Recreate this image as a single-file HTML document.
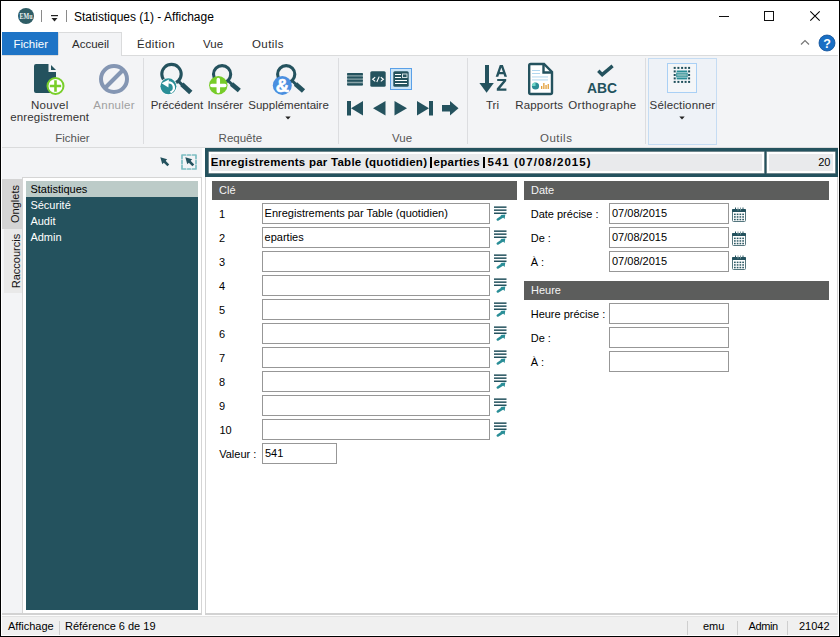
<!DOCTYPE html>
<html><head><meta charset="utf-8"><style>
html,body{margin:0;padding:0;width:840px;height:637px;overflow:hidden;background:#fff}
body{position:relative;font-family:"Liberation Sans",sans-serif}
div{position:absolute}
.t{white-space:nowrap;line-height:1}
</style></head><body>
<div style="left:0px;top:0px;width:840px;height:637px;background:#fff"></div>
<svg style="position:absolute;left:17px;top:8px" width="18" height="17" viewBox="0 0 18 17"><circle cx="9" cy="8" r="8" fill="#2f5d66"/><text x="9" y="11" font-family="Liberation Serif" font-size="7.6" font-weight="bold" fill="#eef3f3" text-anchor="middle" textLength="13" lengthAdjust="spacingAndGlyphs">EMu</text></svg>
<div style="left:41px;top:10px;width:1px;height:12px;background:#8a8a8a"></div>
<svg style="position:absolute;left:50px;top:14px" width="10" height="9" viewBox="0 0 10 9"><rect x="1" y="1" width="7" height="1.2" fill="#222"/><path d="M1.5 4 L7.5 4 L4.5 7.5 Z" fill="#222"/></svg>
<div style="left:66px;top:10px;width:1px;height:12px;background:#8a8a8a"></div>
<div class="t" style="left:74px;top:10.84px;font-size:12px;color:#000;font-weight:normal;">Statistiques (1) - Affichage</div>
<div style="left:719px;top:16px;width:10px;height:1px;background:#111"></div>
<div style="left:764px;top:11px;width:10px;height:10px;border:1px solid #111;box-sizing:border-box"></div>
<svg style="position:absolute;left:809px;top:10px" width="12" height="12" viewBox="0 0 12 12"><path d="M1.3 1.3 L10.7 10.7 M10.7 1.3 L1.3 10.7" stroke="#000" stroke-width="1.05"/></svg>
<div style="left:2px;top:32px;width:56px;height:23px;background:#1e74c6"></div>
<div class="t" style="left:13.5px;top:39.27px;font-size:11.5px;color:#fff;font-weight:normal;">Fichier</div>
<div style="left:58px;top:32px;width:64px;height:24px;background:#f3f4f6;border:1px solid #dadbdc;border-bottom:none;box-sizing:border-box"></div>
<div class="t" style="left:72px;top:39.27px;font-size:11.5px;color:#2b2b2b;font-weight:normal;">Accueil</div>
<div class="t" style="left:137px;top:39.27px;font-size:11.5px;color:#2b2b2b;font-weight:normal;letter-spacing:0.4px">Édition</div>
<div class="t" style="left:203px;top:39.27px;font-size:11.5px;color:#2b2b2b;font-weight:normal;">Vue</div>
<div class="t" style="left:252px;top:39.27px;font-size:11.5px;color:#2b2b2b;font-weight:normal;letter-spacing:0.4px">Outils</div>
<svg style="position:absolute;left:800px;top:39px" width="11" height="7" viewBox="0 0 11 7"><path d="M1 5.5 L5 1.5 L9 5.5" stroke="#777" stroke-width="1.2" fill="none"/></svg>
<svg style="position:absolute;left:818px;top:34px" width="18" height="18" viewBox="0 0 18 18"><circle cx="9" cy="9" r="8" fill="#1a6fc4" stroke="#0f4f97" stroke-width="0.8"/><text x="9" y="13.5" font-family="Liberation Sans" font-size="12.5" font-weight="bold" fill="#fff" text-anchor="middle">?</text></svg>
<div style="left:2px;top:55px;width:836px;height:93px;background:#f3f4f6;border-top:1px solid #dadbdc;border-bottom:1px solid #dadbdc;box-sizing:border-box"></div>
<div style="left:58px;top:55px;width:63px;height:1px;background:#f3f4f6"></div>
<div style="left:143px;top:58px;width:1px;height:86px;background:#dcdde0"></div>
<div style="left:338px;top:58px;width:1px;height:86px;background:#dcdde0"></div>
<div style="left:467px;top:58px;width:1px;height:86px;background:#dcdde0"></div>
<div style="left:645px;top:58px;width:1px;height:86px;background:#dcdde0"></div>
<div class="t" style="left:31px;top:99.57px;font-size:11.5px;color:#333;font-weight:normal;letter-spacing:0.3px">Nouvel</div>
<div class="t" style="left:10.2px;top:111.97px;font-size:11.5px;color:#333;font-weight:normal;letter-spacing:0.16px">enregistrement</div>
<div class="t" style="left:93.3px;top:99.57px;font-size:11.5px;color:#a0a0a0;font-weight:normal;letter-spacing:0.28px">Annuler</div>
<div class="t" style="left:55.2px;top:132.77px;font-size:11.5px;color:#555;font-weight:normal;">Fichier</div>
<div class="t" style="left:150.7px;top:99.57px;font-size:11.5px;color:#333;font-weight:normal;">Précédent</div>
<div class="t" style="left:207.4px;top:99.57px;font-size:11.5px;color:#333;font-weight:normal;">Insérer</div>
<div class="t" style="left:248.3px;top:99.57px;font-size:11.5px;color:#333;font-weight:normal;">Supplémentaire</div>
<svg style="position:absolute;left:285px;top:116px" width="6" height="4" viewBox="0 0 6 4"><path d="M0.3 0.5 L5.7 0.5 L3 3.5 Z" fill="#222"/></svg>
<div class="t" style="left:218.6px;top:132.77px;font-size:11.5px;color:#555;font-weight:normal;">Requête</div>
<div class="t" style="left:392.1px;top:132.77px;font-size:11.5px;color:#555;font-weight:normal;">Vue</div>
<div class="t" style="left:486px;top:99.57px;font-size:11.5px;color:#333;font-weight:normal;">Tri</div>
<div class="t" style="left:515.2px;top:99.57px;font-size:11.5px;color:#333;font-weight:normal;letter-spacing:0.18px">Rapports</div>
<div class="t" style="left:568.3px;top:99.57px;font-size:11.5px;color:#333;font-weight:normal;letter-spacing:0.34px">Orthographe</div>
<div class="t" style="left:540px;top:132.77px;font-size:11.5px;color:#555;font-weight:normal;letter-spacing:0.5px">Outils</div>
<div style="left:648px;top:58px;width:69px;height:87px;background:#eef2f7;border:1px solid #c5dcf3;box-sizing:border-box"></div>
<div class="t" style="left:649.6px;top:99.57px;font-size:11.5px;color:#333;font-weight:normal;letter-spacing:0.14px">Sélectionner</div>
<svg style="position:absolute;left:679px;top:116px" width="6" height="4" viewBox="0 0 6 4"><path d="M0.3 0.5 L5.7 0.5 L3 3.5 Z" fill="#222"/></svg>
<svg style="position:absolute;left:33px;top:63px" width="34" height="34" viewBox="0 0 34 34"><path d="M1 3 Q1 1 3 1 L15.5 1 L15.5 9 L23 9 L23 28 Q23 30 21 30 L3 30 Q1 30 1 28 Z" fill="#24525e"/>
<path d="M18 2 L23 7 L18 7 Z" fill="#24525e"/>
<circle cx="22.5" cy="23" r="8" fill="#fff" stroke="#78cf2a" stroke-width="2"/>
<path d="M22.5 17.3 V28.7 M16.8 23 H28.2" stroke="#78cf2a" stroke-width="2.6"/></svg>
<svg style="position:absolute;left:98px;top:63px" width="32" height="32" viewBox="0 0 32 32"><circle cx="16" cy="16" r="13" fill="none" stroke="#8496b3" stroke-width="4"/><path d="M25 7 L7 25" stroke="#8496b3" stroke-width="4"/></svg>
<svg style="position:absolute;left:150px;top:55px" width="50" height="45" viewBox="0 0 50 45"><circle cx="21.5" cy="19.1" r="9.7" fill="none" stroke="#24525e" stroke-width="3.1"/><path d="M28 25.8 L32.3 29.8" stroke="#24525e" stroke-width="3"/><path d="M31.799999999999997 29.3 L40.8 37.6" stroke="#24525e" stroke-width="4.8"/><circle cx="18.4" cy="31.3" r="8.7" fill="#fff"/><circle cx="18.4" cy="31.3" r="8" fill="#2a8e97"/><path d="M18.3 27.3 A5.2 5.2 0 0 1 20.4 37.4" fill="none" stroke="#fff" stroke-width="2.3"/><path d="M11.6 28.3 L18.9 24.6 L18.4 32.4 Z" fill="#fff"/></svg>
<svg style="position:absolute;left:200px;top:55px" width="50" height="45" viewBox="0 0 50 45"><circle cx="22.1" cy="19.2" r="8.6" fill="none" stroke="#24525e" stroke-width="3.1"/><path d="M28 25.5 L32 29.5" stroke="#24525e" stroke-width="3"/><path d="M31.5 29.0 L39.3 35.5" stroke="#24525e" stroke-width="4.8"/><circle cx="18.3" cy="30.3" r="9.2" fill="#77cc29"/><path d="M18.3 24.5 V36.5 M11.8 30.4 H24.8" stroke="#fff" stroke-width="3.5" stroke-linecap="round"/></svg>
<svg style="position:absolute;left:265px;top:55px" width="50" height="45" viewBox="0 0 50 45"><circle cx="21.2" cy="19.2" r="8.6" fill="none" stroke="#24525e" stroke-width="3.1"/><path d="M27 25.5 L31 29.5" stroke="#24525e" stroke-width="3"/><path d="M30.5 29.0 L38.5 36" stroke="#24525e" stroke-width="4.8"/><circle cx="17.3" cy="30.4" r="9.5" fill="#4a8fe0"/><text x="17.4" y="37" font-family="Liberation Sans" font-weight="bold" font-size="18.5" fill="#fff" stroke="#fff" stroke-width="0.6" text-anchor="middle">&amp;</text></svg>
<svg style="position:absolute;left:346px;top:72px" width="18" height="15" viewBox="0 0 18 15"><rect x="1" y="1" width="16" height="12.5" rx="1" fill="#8aa4a9"/><rect x="1" y="1" width="16" height="2.2" rx="1" fill="#24525e"/><rect x="1" y="4.4" width="16" height="2" rx="1" fill="#24525e"/><rect x="1" y="7.8" width="16" height="2" rx="1" fill="#24525e"/><rect x="1" y="11.3" width="16" height="2.2" rx="1" fill="#24525e"/></svg>
<svg style="position:absolute;left:370px;top:71px" width="16" height="16" viewBox="0 0 16 16"><rect x="0.3" y="0.3" width="15.4" height="15.4" rx="1.5" fill="#24525e"/><path d="M5.2 6.2 L2.6 8.3 L5.2 10.4 M10.8 6.2 L13.4 8.3 L10.8 10.4 M9.2 5.6 L6.8 11" fill="none" stroke="#fff" stroke-width="1.1"/></svg>
<div style="left:390px;top:68px;width:22px;height:22px;background:#cce4f7;border:1px solid #5aa0e8;box-sizing:border-box"></div>
<svg style="position:absolute;left:393px;top:71px" width="16" height="16" viewBox="0 0 16 16"><rect x="0.3" y="0.3" width="15.4" height="15.4" rx="1.5" fill="#24525e"/><rect x="2" y="3" width="6" height="1" fill="#fff"/><rect x="2" y="6" width="6" height="1" fill="#fff"/><rect x="9.5" y="3" width="4.5" height="3.5" fill="none" stroke="#e6eef0" stroke-width="0.9"/><rect x="2" y="9" width="12" height="1" fill="#fff"/><rect x="2" y="12" width="12" height="1" fill="#fff"/></svg>
<svg style="position:absolute;left:346px;top:100px" width="120" height="17" viewBox="0 0 120 17"><rect x="1" y="1" width="4" height="14.5" fill="#24525e"/><path d="M5 8.2 L17 1 L17 15.5 Z" fill="#24525e"/>
<path d="M27 8.2 L39.5 1 L39.5 15.5 Z" fill="#24525e"/>
<path d="M48.5 1 L61 8.2 L48.5 15.5 Z" fill="#24525e"/>
<path d="M71 1 L83 8.2 L71 15.5 Z" fill="#24525e"/><rect x="83" y="1" width="4" height="14.5" fill="#24525e"/>
<rect x="96" y="5" width="8" height="6.5" fill="#24525e"/><path d="M104 1 L112.5 8.2 L104 15.5 Z" fill="#24525e"/></svg>
<svg style="position:absolute;left:478px;top:63px" width="32" height="32" viewBox="0 0 32 32"><rect x="7" y="2" width="4" height="19" fill="#24525e"/><path d="M1.4 20 L15.8 20 L8.6 29.8 Z" fill="#24525e"/>
<path fill-rule="evenodd" d="M21.8 2 H24.9 L29 13.8 H26.4 L25.6 11.2 H21.1 L20.3 13.8 H17.7 Z M21.8 8.9 H24.9 L23.35 4.4 Z" fill="#24525e"/>
<path d="M19.2 15.9 H28.2 V18.1 L22 25.5 H28.4 V27.7 H18.8 V25.6 L25.1 18.1 H19.2 Z" fill="#24525e"/></svg>
<svg style="position:absolute;left:527px;top:62px" width="28" height="34" viewBox="0 0 28 34"><path d="M2.2 3.5 Q2.2 2 3.7 2 L17 2 L25 10 L25 30.5 Q25 32 23.5 32 L3.7 32 Q2.2 32 2.2 30.5 Z" fill="#fff" stroke="#24525e" stroke-width="2.4"/>
<path d="M16.5 2 L16.5 10.5 L25 10.5" fill="none" stroke="#24525e" stroke-width="2.4"/>
<rect x="5" y="8" width="8" height="0.9" fill="#a9d3ee"/><rect x="5" y="11" width="8" height="0.9" fill="#a9d3ee"/><rect x="5" y="14.5" width="16" height="0.9" fill="#a9d3ee"/><rect x="5" y="17.5" width="16" height="0.9" fill="#a9d3ee"/>
<circle cx="8.5" cy="24" r="3.6" fill="#2a8e97"/><path d="M8.5 24 L8.5 20.4 A3.6 3.6 0 0 0 4.9 24 Z" fill="#6fd6c8"/>
<rect x="14" y="24" width="1.3" height="3" fill="#e3a03a"/><rect x="16.2" y="21" width="1.3" height="6" fill="#e3a03a"/><rect x="18.4" y="23" width="1.3" height="4" fill="#e3a03a"/><rect x="20.6" y="22" width="1.3" height="5" fill="#e3a03a"/></svg>
<svg style="position:absolute;left:585px;top:62px" width="34" height="34" viewBox="0 0 34 34"><path d="M13.3 8.8 L17.2 12.6 L27.6 3.9" fill="none" stroke="#24525e" stroke-width="3.4"/>
<text x="2" y="31" font-family="Liberation Sans" font-weight="bold" font-size="15" textLength="30" lengthAdjust="spacingAndGlyphs" fill="#24525e">ABC</text></svg>
<div style="left:667px;top:63px;width:30px;height:30px;background:#f4f6f8;border:1px solid #a9d0f5;box-sizing:border-box"></div>
<svg style="position:absolute;left:670px;top:64px" width="24" height="24" viewBox="0 0 24 24"><rect x="3.7000000000000455" y="2.9000000000000057" width="2" height="2" fill="#1f4f5a"/><rect x="3.7000000000000455" y="6.400000000000006" width="2" height="2" fill="#1f4f5a"/><rect x="3.7000000000000455" y="10.0" width="2" height="2" fill="#1f4f5a"/><rect x="3.7000000000000455" y="13.400000000000006" width="2" height="2" fill="#1f4f5a"/><rect x="3.7000000000000455" y="16.900000000000006" width="2" height="2" fill="#1f4f5a"/><rect x="7.399999999999977" y="2.9000000000000057" width="2" height="2" fill="#1f4f5a"/><rect x="7.399999999999977" y="16.900000000000006" width="2" height="2" fill="#1f4f5a"/><rect x="11.100000000000023" y="2.9000000000000057" width="2" height="2" fill="#1f4f5a"/><rect x="11.100000000000023" y="16.900000000000006" width="2" height="2" fill="#1f4f5a"/><rect x="14.600000000000023" y="2.9000000000000057" width="2" height="2" fill="#1f4f5a"/><rect x="14.600000000000023" y="16.900000000000006" width="2" height="2" fill="#1f4f5a"/><rect x="18.100000000000023" y="2.9000000000000057" width="2" height="2" fill="#1f4f5a"/><rect x="18.100000000000023" y="6.400000000000006" width="2" height="2" fill="#1f4f5a"/><rect x="18.100000000000023" y="10.0" width="2" height="2" fill="#1f4f5a"/><rect x="18.100000000000023" y="13.400000000000006" width="2" height="2" fill="#1f4f5a"/><rect x="18.100000000000023" y="16.900000000000006" width="2" height="2" fill="#1f4f5a"/><rect x="6.7" y="6.5" width="10.5" height="1.6" fill="#2a8e97"/><rect x="6.7" y="9" width="10.5" height="4" fill="#7fb8b9" stroke="#2a8e97" stroke-width="0.9"/><rect x="6.7" y="13.8" width="10.5" height="1.6" fill="#2a8e97"/></svg>
<div style="left:2px;top:148px;width:200px;height:466px;background:#f3f4f6"></div>
<svg style="position:absolute;left:160px;top:157px" width="11" height="11" viewBox="0 0 11 11"><path d="M0.3 0.3 L7.2 2.3 L2.3 7.2 Z" fill="#24525e"/><path d="M3.5 3.5 L8.3 8.3" stroke="#24525e" stroke-width="2.6"/></svg>
<svg style="position:absolute;left:180px;top:153px" width="18" height="18" viewBox="0 0 18 18"><path d="M2 5.6 V2 H5.6 M12.4 2 H16 V5.6 M16 12.4 V16 H12.4 M5.6 16 H2 V12.4 M7.6 2 H10.4 M7.6 16 H10.4 M2 7.6 V10.4 M16 7.6 V10.4" fill="none" stroke="#7cbdc2" stroke-width="1.7" stroke-linecap="round" stroke-linejoin="round"/></svg>
<svg style="position:absolute;left:185px;top:157px" width="11" height="11" viewBox="0 0 11 11"><path d="M0.3 0.3 L7.2 2.3 L2.3 7.2 Z" fill="#24525e"/><path d="M3.5 3.5 L8.3 8.3" stroke="#24525e" stroke-width="2.6"/></svg>
<div style="left:22px;top:177px;width:180px;height:437px;background:#fff;border:1px solid #d5d5d5;box-sizing:border-box"></div>
<div style="left:26px;top:181px;width:172px;height:429px;background:#24525e"></div>
<div style="left:26px;top:181px;width:172px;height:16px;background:#bccbc8"></div>
<div class="t" style="left:30.4px;top:184.49px;font-size:11px;color:#000;font-weight:normal;">Statistiques</div>
<div class="t" style="left:30.4px;top:200.49px;font-size:11px;color:#fff;font-weight:normal;">Sécurité</div>
<div class="t" style="left:30.4px;top:216.49px;font-size:11px;color:#fff;font-weight:normal;">Audit</div>
<div class="t" style="left:30.4px;top:232.49px;font-size:11px;color:#fff;font-weight:normal;">Admin</div>
<div style="left:2px;top:179px;width:20px;height:50px;background:#d4d4d4"></div>
<div style="left:4px;top:229px;width:18px;height:64px;background:#e9e9e9"></div>
<div class="t" style="left:-10.5px;top:197px;width:50px;height:14px;font-size:11px;line-height:14px;text-align:center;transform:rotate(-90deg);color:#111">Onglets</div>
<div class="t" style="left:-19.5px;top:254px;width:70px;height:14px;font-size:11px;line-height:14px;text-align:center;transform:rotate(-90deg);color:#111">Raccourcis</div>
<div style="left:205px;top:177px;width:633px;height:437px;background:#fff;border-left:1px solid #d5d5d5;border-right:1px solid #d5d5d5;box-sizing:border-box"></div>
<div style="left:205px;top:148px;width:633px;height:29px;background:#24525e"></div>
<div style="left:209px;top:152px;width:555px;height:21px;background:#e9eaec;border:2px solid #fff;box-shadow:0 0 0 0.5px #b9b9b9;box-sizing:border-box"></div>
<div style="left:767px;top:152px;width:68px;height:21px;background:#e9eaec;border:2px solid #fff;box-shadow:0 0 0 0.5px #b9b9b9;box-sizing:border-box"></div>
<div class="t" style="left:210.8px;top:157.27px;font-size:11.5px;color:#000;font-weight:bold;letter-spacing:0.26px">Enregistrements par Table (quotidien)</div>
<div style="left:429.6px;top:157px;width:2px;height:10.5px;background:#000"></div>
<div class="t" style="left:433.5px;top:157.27px;font-size:11.5px;color:#000;font-weight:bold;letter-spacing:0.28px">eparties</div>
<div style="left:482.8px;top:157px;width:2px;height:10.5px;background:#000"></div>
<div class="t" style="left:487.5px;top:157.27px;font-size:11.5px;color:#000;font-weight:bold;letter-spacing:1.03px">541 (07/08/2015)</div>
<div class="t" style="right:9.5px;top:156.69px;font-size:11px;color:#000;font-weight:normal;">20</div>
<div style="left:212px;top:181px;width:305px;height:19px;background:#5c5d5c"></div>
<div class="t" style="left:219px;top:184.69px;font-size:11px;color:#f4f4f4;font-weight:normal;">Clé</div>
<div style="left:524px;top:181px;width:305px;height:19px;background:#5c5d5c"></div>
<div class="t" style="left:531px;top:184.69px;font-size:11px;color:#f4f4f4;font-weight:normal;">Date</div>
<div style="left:524px;top:281px;width:305px;height:19px;background:#5c5d5c"></div>
<div class="t" style="left:531px;top:284.69px;font-size:11px;color:#f4f4f4;font-weight:normal;">Heure</div>
<div style="left:262px;top:203px;width:228px;height:21px;border:1px solid #979797;box-sizing:border-box;background:#fff"></div>
<div class="t" style="left:219px;top:209.19px;font-size:11px;color:#000;font-weight:normal;">1</div>
<div class="t" style="left:264.6px;top:207.69px;font-size:11px;color:#000;font-weight:normal;">Enregistrements par Table (quotidien)</div>
<svg style="position:absolute;left:494px;top:206px" width="14" height="15" viewBox="0 0 14 15"><rect x="0" y="0.4" width="12.5" height="1.5" fill="#24525e"/><rect x="0" y="3.4" width="12.5" height="1.5" fill="#24525e"/><rect x="0" y="6.5" width="12.5" height="1.5" fill="#24525e"/><path d="M3.9 13.5 L8.3 10.6" stroke="#2a8e97" stroke-width="2.6" stroke-linecap="round"/><path d="M11.3 8.6 L6.4 9.0 L10.6 13.1 Z" fill="#2a8e97"/></svg>
<div style="left:262px;top:227px;width:228px;height:21px;border:1px solid #979797;box-sizing:border-box;background:#fff"></div>
<div class="t" style="left:219px;top:233.19px;font-size:11px;color:#000;font-weight:normal;">2</div>
<div class="t" style="left:264.6px;top:231.69px;font-size:11px;color:#000;font-weight:normal;">eparties</div>
<svg style="position:absolute;left:494px;top:230px" width="14" height="15" viewBox="0 0 14 15"><rect x="0" y="0.4" width="12.5" height="1.5" fill="#24525e"/><rect x="0" y="3.4" width="12.5" height="1.5" fill="#24525e"/><rect x="0" y="6.5" width="12.5" height="1.5" fill="#24525e"/><path d="M3.9 13.5 L8.3 10.6" stroke="#2a8e97" stroke-width="2.6" stroke-linecap="round"/><path d="M11.3 8.6 L6.4 9.0 L10.6 13.1 Z" fill="#2a8e97"/></svg>
<div style="left:262px;top:251px;width:228px;height:21px;border:1px solid #979797;box-sizing:border-box;background:#fff"></div>
<div class="t" style="left:219px;top:257.19px;font-size:11px;color:#000;font-weight:normal;">3</div>
<svg style="position:absolute;left:494px;top:254px" width="14" height="15" viewBox="0 0 14 15"><rect x="0" y="0.4" width="12.5" height="1.5" fill="#24525e"/><rect x="0" y="3.4" width="12.5" height="1.5" fill="#24525e"/><rect x="0" y="6.5" width="12.5" height="1.5" fill="#24525e"/><path d="M3.9 13.5 L8.3 10.6" stroke="#2a8e97" stroke-width="2.6" stroke-linecap="round"/><path d="M11.3 8.6 L6.4 9.0 L10.6 13.1 Z" fill="#2a8e97"/></svg>
<div style="left:262px;top:275px;width:228px;height:21px;border:1px solid #979797;box-sizing:border-box;background:#fff"></div>
<div class="t" style="left:219px;top:281.19px;font-size:11px;color:#000;font-weight:normal;">4</div>
<svg style="position:absolute;left:494px;top:278px" width="14" height="15" viewBox="0 0 14 15"><rect x="0" y="0.4" width="12.5" height="1.5" fill="#24525e"/><rect x="0" y="3.4" width="12.5" height="1.5" fill="#24525e"/><rect x="0" y="6.5" width="12.5" height="1.5" fill="#24525e"/><path d="M3.9 13.5 L8.3 10.6" stroke="#2a8e97" stroke-width="2.6" stroke-linecap="round"/><path d="M11.3 8.6 L6.4 9.0 L10.6 13.1 Z" fill="#2a8e97"/></svg>
<div style="left:262px;top:299px;width:228px;height:21px;border:1px solid #979797;box-sizing:border-box;background:#fff"></div>
<div class="t" style="left:219px;top:305.19px;font-size:11px;color:#000;font-weight:normal;">5</div>
<svg style="position:absolute;left:494px;top:302px" width="14" height="15" viewBox="0 0 14 15"><rect x="0" y="0.4" width="12.5" height="1.5" fill="#24525e"/><rect x="0" y="3.4" width="12.5" height="1.5" fill="#24525e"/><rect x="0" y="6.5" width="12.5" height="1.5" fill="#24525e"/><path d="M3.9 13.5 L8.3 10.6" stroke="#2a8e97" stroke-width="2.6" stroke-linecap="round"/><path d="M11.3 8.6 L6.4 9.0 L10.6 13.1 Z" fill="#2a8e97"/></svg>
<div style="left:262px;top:323px;width:228px;height:21px;border:1px solid #979797;box-sizing:border-box;background:#fff"></div>
<div class="t" style="left:219px;top:329.19px;font-size:11px;color:#000;font-weight:normal;">6</div>
<svg style="position:absolute;left:494px;top:326px" width="14" height="15" viewBox="0 0 14 15"><rect x="0" y="0.4" width="12.5" height="1.5" fill="#24525e"/><rect x="0" y="3.4" width="12.5" height="1.5" fill="#24525e"/><rect x="0" y="6.5" width="12.5" height="1.5" fill="#24525e"/><path d="M3.9 13.5 L8.3 10.6" stroke="#2a8e97" stroke-width="2.6" stroke-linecap="round"/><path d="M11.3 8.6 L6.4 9.0 L10.6 13.1 Z" fill="#2a8e97"/></svg>
<div style="left:262px;top:347px;width:228px;height:21px;border:1px solid #979797;box-sizing:border-box;background:#fff"></div>
<div class="t" style="left:219px;top:353.19px;font-size:11px;color:#000;font-weight:normal;">7</div>
<svg style="position:absolute;left:494px;top:350px" width="14" height="15" viewBox="0 0 14 15"><rect x="0" y="0.4" width="12.5" height="1.5" fill="#24525e"/><rect x="0" y="3.4" width="12.5" height="1.5" fill="#24525e"/><rect x="0" y="6.5" width="12.5" height="1.5" fill="#24525e"/><path d="M3.9 13.5 L8.3 10.6" stroke="#2a8e97" stroke-width="2.6" stroke-linecap="round"/><path d="M11.3 8.6 L6.4 9.0 L10.6 13.1 Z" fill="#2a8e97"/></svg>
<div style="left:262px;top:371px;width:228px;height:21px;border:1px solid #979797;box-sizing:border-box;background:#fff"></div>
<div class="t" style="left:219px;top:377.19px;font-size:11px;color:#000;font-weight:normal;">8</div>
<svg style="position:absolute;left:494px;top:374px" width="14" height="15" viewBox="0 0 14 15"><rect x="0" y="0.4" width="12.5" height="1.5" fill="#24525e"/><rect x="0" y="3.4" width="12.5" height="1.5" fill="#24525e"/><rect x="0" y="6.5" width="12.5" height="1.5" fill="#24525e"/><path d="M3.9 13.5 L8.3 10.6" stroke="#2a8e97" stroke-width="2.6" stroke-linecap="round"/><path d="M11.3 8.6 L6.4 9.0 L10.6 13.1 Z" fill="#2a8e97"/></svg>
<div style="left:262px;top:395px;width:228px;height:21px;border:1px solid #979797;box-sizing:border-box;background:#fff"></div>
<div class="t" style="left:219px;top:401.19px;font-size:11px;color:#000;font-weight:normal;">9</div>
<svg style="position:absolute;left:494px;top:398px" width="14" height="15" viewBox="0 0 14 15"><rect x="0" y="0.4" width="12.5" height="1.5" fill="#24525e"/><rect x="0" y="3.4" width="12.5" height="1.5" fill="#24525e"/><rect x="0" y="6.5" width="12.5" height="1.5" fill="#24525e"/><path d="M3.9 13.5 L8.3 10.6" stroke="#2a8e97" stroke-width="2.6" stroke-linecap="round"/><path d="M11.3 8.6 L6.4 9.0 L10.6 13.1 Z" fill="#2a8e97"/></svg>
<div style="left:262px;top:419px;width:228px;height:21px;border:1px solid #979797;box-sizing:border-box;background:#fff"></div>
<div class="t" style="left:219.5px;top:425.19px;font-size:11px;color:#000;font-weight:normal;">10</div>
<svg style="position:absolute;left:494px;top:422px" width="14" height="15" viewBox="0 0 14 15"><rect x="0" y="0.4" width="12.5" height="1.5" fill="#24525e"/><rect x="0" y="3.4" width="12.5" height="1.5" fill="#24525e"/><rect x="0" y="6.5" width="12.5" height="1.5" fill="#24525e"/><path d="M3.9 13.5 L8.3 10.6" stroke="#2a8e97" stroke-width="2.6" stroke-linecap="round"/><path d="M11.3 8.6 L6.4 9.0 L10.6 13.1 Z" fill="#2a8e97"/></svg>
<div style="left:262px;top:443px;width:75px;height:21px;border:1px solid #979797;box-sizing:border-box;background:#fff"></div>
<div class="t" style="left:219.2px;top:449.49px;font-size:11px;color:#000;font-weight:normal;">Valeur :</div>
<div class="t" style="left:265px;top:448.19px;font-size:11px;color:#000;font-weight:normal;">541</div>
<div class="t" style="left:530.7px;top:208.69px;font-size:11px;color:#000;font-weight:normal;">Date précise :</div>
<div style="left:609px;top:203px;width:120px;height:21px;border:1px solid #979797;box-sizing:border-box;background:#fff"></div>
<div class="t" style="left:612px;top:207.69px;font-size:11px;color:#000;font-weight:normal;">07/08/2015</div>
<svg style="position:absolute;left:732px;top:207px" width="15" height="16" viewBox="0 0 15 16"><rect x="0.5" y="2.5" width="13" height="12" rx="1" fill="#fff" stroke="#55767e" stroke-width="1"/>
<rect x="0" y="2" width="14" height="3" rx="0.8" fill="#24525e"/>
<rect x="3" y="0.5" width="1" height="3" fill="#24525e"/><rect x="5.5" y="0.5" width="1" height="3" fill="#7d9aa0"/><rect x="8" y="0.5" width="1" height="3" fill="#7d9aa0"/><rect x="10.5" y="0.5" width="1" height="3" fill="#24525e"/>
<rect x="2" y="5" width="10" height="1" fill="#fff"/>
<rect x="2.0" y="6.6" width="1.7" height="1.5" fill="#2d5a64"/><rect x="2.0" y="9.2" width="1.7" height="1.5" fill="#2d5a64"/><rect x="2.0" y="11.8" width="1.7" height="1.5" fill="#2d5a64"/><rect x="4.75" y="6.6" width="1.7" height="1.5" fill="#2d5a64"/><rect x="4.75" y="9.2" width="1.7" height="1.5" fill="#2d5a64"/><rect x="4.75" y="11.8" width="1.7" height="1.5" fill="#2d5a64"/><rect x="7.5" y="6.6" width="1.7" height="1.5" fill="#2d5a64"/><rect x="7.5" y="9.2" width="1.7" height="1.5" fill="#2d5a64"/><rect x="7.5" y="11.8" width="1.7" height="1.5" fill="#2d5a64"/><rect x="10.25" y="6.6" width="1.7" height="1.5" fill="#2d5a64"/><rect x="10.25" y="9.2" width="1.7" height="1.5" fill="#2d5a64"/><rect x="10.25" y="11.8" width="1.7" height="1.5" fill="#2d5a64"/></svg>
<div class="t" style="left:530.7px;top:232.69px;font-size:11px;color:#000;font-weight:normal;">De :</div>
<div style="left:609px;top:227px;width:120px;height:21px;border:1px solid #979797;box-sizing:border-box;background:#fff"></div>
<div class="t" style="left:612px;top:231.69px;font-size:11px;color:#000;font-weight:normal;">07/08/2015</div>
<svg style="position:absolute;left:732px;top:231px" width="15" height="16" viewBox="0 0 15 16"><rect x="0.5" y="2.5" width="13" height="12" rx="1" fill="#fff" stroke="#55767e" stroke-width="1"/>
<rect x="0" y="2" width="14" height="3" rx="0.8" fill="#24525e"/>
<rect x="3" y="0.5" width="1" height="3" fill="#24525e"/><rect x="5.5" y="0.5" width="1" height="3" fill="#7d9aa0"/><rect x="8" y="0.5" width="1" height="3" fill="#7d9aa0"/><rect x="10.5" y="0.5" width="1" height="3" fill="#24525e"/>
<rect x="2" y="5" width="10" height="1" fill="#fff"/>
<rect x="2.0" y="6.6" width="1.7" height="1.5" fill="#2d5a64"/><rect x="2.0" y="9.2" width="1.7" height="1.5" fill="#2d5a64"/><rect x="2.0" y="11.8" width="1.7" height="1.5" fill="#2d5a64"/><rect x="4.75" y="6.6" width="1.7" height="1.5" fill="#2d5a64"/><rect x="4.75" y="9.2" width="1.7" height="1.5" fill="#2d5a64"/><rect x="4.75" y="11.8" width="1.7" height="1.5" fill="#2d5a64"/><rect x="7.5" y="6.6" width="1.7" height="1.5" fill="#2d5a64"/><rect x="7.5" y="9.2" width="1.7" height="1.5" fill="#2d5a64"/><rect x="7.5" y="11.8" width="1.7" height="1.5" fill="#2d5a64"/><rect x="10.25" y="6.6" width="1.7" height="1.5" fill="#2d5a64"/><rect x="10.25" y="9.2" width="1.7" height="1.5" fill="#2d5a64"/><rect x="10.25" y="11.8" width="1.7" height="1.5" fill="#2d5a64"/></svg>
<div class="t" style="left:530.7px;top:256.69px;font-size:11px;color:#000;font-weight:normal;">À :</div>
<div style="left:609px;top:251px;width:120px;height:21px;border:1px solid #979797;box-sizing:border-box;background:#fff"></div>
<div class="t" style="left:612px;top:255.69px;font-size:11px;color:#000;font-weight:normal;">07/08/2015</div>
<svg style="position:absolute;left:732px;top:255px" width="15" height="16" viewBox="0 0 15 16"><rect x="0.5" y="2.5" width="13" height="12" rx="1" fill="#fff" stroke="#55767e" stroke-width="1"/>
<rect x="0" y="2" width="14" height="3" rx="0.8" fill="#24525e"/>
<rect x="3" y="0.5" width="1" height="3" fill="#24525e"/><rect x="5.5" y="0.5" width="1" height="3" fill="#7d9aa0"/><rect x="8" y="0.5" width="1" height="3" fill="#7d9aa0"/><rect x="10.5" y="0.5" width="1" height="3" fill="#24525e"/>
<rect x="2" y="5" width="10" height="1" fill="#fff"/>
<rect x="2.0" y="6.6" width="1.7" height="1.5" fill="#2d5a64"/><rect x="2.0" y="9.2" width="1.7" height="1.5" fill="#2d5a64"/><rect x="2.0" y="11.8" width="1.7" height="1.5" fill="#2d5a64"/><rect x="4.75" y="6.6" width="1.7" height="1.5" fill="#2d5a64"/><rect x="4.75" y="9.2" width="1.7" height="1.5" fill="#2d5a64"/><rect x="4.75" y="11.8" width="1.7" height="1.5" fill="#2d5a64"/><rect x="7.5" y="6.6" width="1.7" height="1.5" fill="#2d5a64"/><rect x="7.5" y="9.2" width="1.7" height="1.5" fill="#2d5a64"/><rect x="7.5" y="11.8" width="1.7" height="1.5" fill="#2d5a64"/><rect x="10.25" y="6.6" width="1.7" height="1.5" fill="#2d5a64"/><rect x="10.25" y="9.2" width="1.7" height="1.5" fill="#2d5a64"/><rect x="10.25" y="11.8" width="1.7" height="1.5" fill="#2d5a64"/></svg>
<div class="t" style="left:530.7px;top:308.69px;font-size:11px;color:#000;font-weight:normal;">Heure précise :</div>
<div style="left:609px;top:303px;width:120px;height:21px;border:1px solid #979797;box-sizing:border-box;background:#fff"></div>
<div class="t" style="left:530.7px;top:332.69px;font-size:11px;color:#000;font-weight:normal;">De :</div>
<div style="left:609px;top:327px;width:120px;height:21px;border:1px solid #979797;box-sizing:border-box;background:#fff"></div>
<div class="t" style="left:530.7px;top:356.69px;font-size:11px;color:#000;font-weight:normal;">À :</div>
<div style="left:609px;top:351px;width:120px;height:21px;border:1px solid #979797;box-sizing:border-box;background:#fff"></div>
<div style="left:2px;top:613px;width:836px;height:2px;background:#d2d2d2"></div>
<div style="left:202px;top:148px;width:3px;height:467px;background:#fff"></div>
<div style="left:2px;top:615px;width:836px;height:1px;background:#fdfdfd"></div>
<div style="left:2px;top:616px;width:836px;height:1px;background:#e2e2e2"></div>
<div style="left:2px;top:617px;width:836px;height:18px;background:#f0f0f0"></div>
<div class="t" style="left:8px;top:620.69px;font-size:11px;color:#000;font-weight:normal;">Affichage</div>
<div style="left:59px;top:621px;width:1px;height:14px;background:#cfcfcf"></div>
<div class="t" style="left:65px;top:620.69px;font-size:11px;color:#000;font-weight:normal;">Référence 6 de 19</div>
<div style="left:687px;top:621px;width:1px;height:14px;background:#cfcfcf"></div>
<div style="left:737px;top:621px;width:1px;height:14px;background:#cfcfcf"></div>
<div style="left:787px;top:621px;width:1px;height:14px;background:#cfcfcf"></div>
<div class="t" style="left:703px;top:620.69px;font-size:11px;color:#000;font-weight:normal;">emu</div>
<div class="t" style="left:748.6px;top:620.69px;font-size:11px;color:#000;font-weight:normal;letter-spacing:-0.4px">Admin</div>
<div class="t" style="left:799px;top:620.69px;font-size:11px;color:#000;font-weight:normal;">21042</div>
<div style="left:0px;top:0px;width:840px;height:637px;border:1px solid #000;box-sizing:border-box;background:transparent"></div>
</body></html>
